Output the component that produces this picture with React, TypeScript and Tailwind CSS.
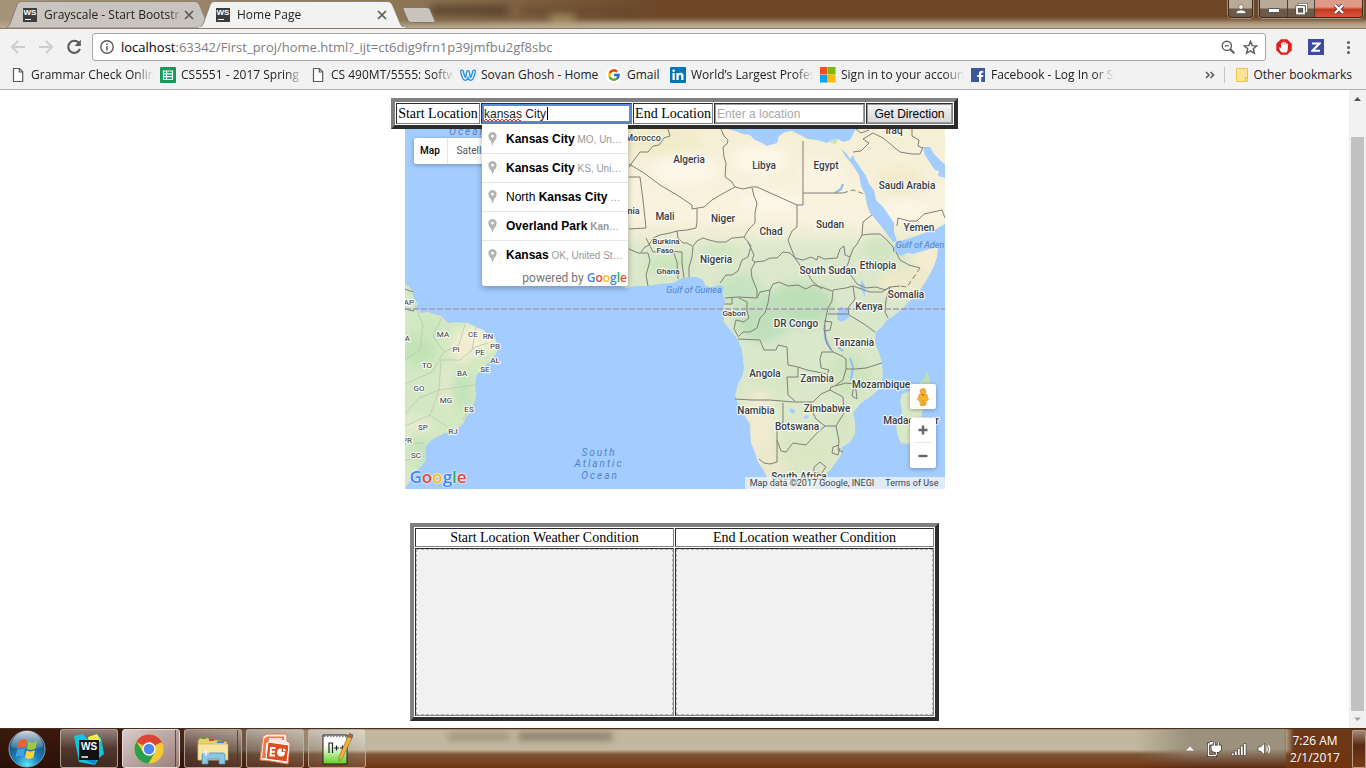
import React from "react";
import { FcGoogle } from "react-icons/fc";

const africa =
  "M600 120 L722 120 L724 128 L735 131 L743 134 L750 135 L755 140 L760 142 L767 146 L777 143 L779 136 L785 132 L792 131 L800 135 L808 139 L817 140 L827 143 L832 140 L838 139 L843 142 L850 140 L852 136 L856 129 L856 120 L960 120 L960 222 L945 224 L936 229 L927 232 L914 237 L900 241 L896 242 L893 249 L897 254 L901 256 L907 253 L913 254 L927 250 L938 247 L937 257 L933 268 L928 277 L924 284 L920 290 L912 299 L903 308 L895 315 L887 320 L882 327 L876 332 L875 343 L878 350 L882 362 L883 377 L878 390 L870 397 L861 403 L853 413 L855 422 L855 434 L850 442 L842 447 L841 455 L837 461 L831 469 L823 477 L815 489 L815 500 L771 500 L771 489 L767 477 L763 469 L758 462 L755 452 L751 443 L750 424 L745 416 L742 407 L737 402 L735 395 L738 384 L742 377 L744 368 L743 360 L742 350 L738 340 L731 331 L724 322 L723 310 L725 301 L723 294 L724 287 L720 285 L712 287 L706 287 L703 280 L697 277 L689 277 L680 279 L673 283 L660 284 L648 286 L636 286 L626 288 L600 280 Z";

const brazil =
  "M400 281 L405 284 L409 286 L412 291 L414 299 L418 304 L412 312 L418 309 L421 313 L428 312 L434 314 L442 316 L445 320 L448 323 L456 322 L468 323 L474 326 L483 330 L488 334 L495 338 L498 346 L497 352 L493 358 L488 363 L482 369 L476 376 L475 385 L476 395 L474 404 L472 412 L466 417 L463 424 L454 431 L445 433 L437 437 L430 441 L425 447 L426 455 L425 462 L420 467 L415 473 L410 481 L405 489 L400 500 Z";

const madagascar =
  "M927 372 L930 381 L929 391 L925 403 L921 417 L916 432 L912 441 L908 444 L901 443 L898 437 L896 427 L901 416 L902 410 L900 402 L902 394 L910 391 L918 386 L924 378 Z";

const borders = [
  "M629 167 L634 160 L640 152 L648 152 L653 146 L659 145 L664 138 L670 136 L668 129",
  "M629 164 L644 173 L660 185 L677 195 L692 205 L692 209 L698 208 L704 207 L712 200 L722 194 L735 187",
  "M629 177 L640 177 L643 200 L646 228 L629 229",
  "M721 129 L724 136 L728 140 L727 144 L723 147 L724 157 L726 163 L725 177 L731 181 L735 187 L743 189 L752 187 L757 187 L777 196 L797 205 L803 205 L803 141",
  "M803 193 L843 193",
  "M697 209 L697 222 L696 228 L687 230 L677 231 L670 233 L660 235 L653 238 L649 245 L645 247 L641 252",
  "M752 188 L754 196 L757 203 L755 213 L755 223 L749 229 L744 237 L732 238 L726 242 L717 242 L709 240 L703 238 L697 241 L693 246 L692 257 L689 267 L689 277",
  "M677 231 L678 238 L683 243 L687 243 L692 246",
  "M667 251 L682 252 L682 263 L684 278 M673 251 L677 262 L678 279",
  "M629 249 L638 253 L648 253 L650 261 L646 275 L648 286",
  "M646 238 L653 252 L667 251",
  "M744 237 L748 242 L751 246 L748 257 L742 260 L738 271 L732 275 L726 275 L720 283",
  "M748 242 L754 255 L752 260 L755 262 L751 270 L752 278 L757 290 L757 298",
  "M755 262 L764 261 L770 258 L777 258 L783 252 L790 253 L795 258 L802 268 L807 273 L813 282 L822 289",
  "M797 205 L797 227 L792 231 L788 240 L791 248 L795 258 L803 260 L811 257 L817 260 L818 256 L824 259 L837 258 L840 249 L844 246 L845 255 L850 257 L853 249 L857 244 L862 235 L863 222 L868 218 L872 215",
  "M850 257 L848 264 L845 268 L850 274 L857 284 L866 288 L876 287 L885 290 L890 287 L900 286",
  "M862 235 L871 234 L880 234 L886 239 L893 247 L894 252",
  "M896 252 L900 260 L909 265 L920 268",
  "M897 226 L898 218 L909 221 L917 221 L924 214 L942 210 L945 218",
  "M853 152 L861 151 L869 143 L863 139 L873 133 L883 138 L900 152 L912 154 L920 154 L923 147",
  "M856 129 L861 133 L869 130",
  "M912 129 L912 136 L919 140 L918 146 L923 148",
  "M725 298 L738 297 L757 298 L760 292 L770 290 L773 284 L779 282 L788 286 L798 285 L806 289 L813 285 L824 288 L832 291",
  "M770 290 L768 303 L765 313 L760 318 L757 328 L750 332 L743 332 L738 337",
  "M732 298 L732 304 L724 304 M739 298 L747 302 L747 311 L749 318 L744 322 L736 320 L734 329 L738 336",
  "M738 339 L760 340 L764 350 L776 350 L778 345 L787 347 L788 365 L798 367 L798 377 L787 377 L788 395 L795 401",
  "M798 367 L807 370 L817 372 L827 374 L829 370 L821 368 L820 359 L822 352 L833 352",
  "M833 290 L832 301 L828 308 L826 317 L824 329 L827 344 L833 352 L842 356 L846 359 L846 369 L843 380 L836 385",
  "M833 290 L846 288 L853 286 L870 292 L882 292 L890 287 L886 300 L885 312 L888 318",
  "M853 287 L855 299 L848 308 L849 315 L864 324 L875 332",
  "M828 314 L848 314 M824 321 L832 322 L830 330 L824 331",
  "M846 369 L855 369 L866 368 L882 363",
  "M735 399 L752 400 L770 400 L793 402 L813 402 L821 394 L830 390 L831 387 L846 383 L854 384 L852 396 L857 399 L856 390 L852 382",
  "M783 403 L783 423 L777 423 L777 462 L770 464 L764 463 L759 459",
  "M777 440 L781 451 L786 452 L793 443 L806 445 L817 433 L825 426 L816 419 L812 411 L810 402",
  "M830 390 L843 397 L844 413 L836 426 L825 426 M836 426 L839 441 L838 450 L843 452",
  "M839 445 L833 447 L832 453 L838 455 L840 448",
  "M814 467 L820 462 L826 467 L821 474 L814 472 Z",
];

const stateLines =
  "M415 305 L423 325 L420 350 L405 360 M442 317 L433 336 L444 352 L432 372 L405 384 M465 324 L459 345 L444 352 M476 327 L472 350 L460 360 L441 360 M488 343 L472 348 L486 357 M441 360 L439 390 L475 385 M439 390 L419 398 L405 414 M439 390 L430 415 L449 428 M430 415 L405 426 M405 444 L424 443 M405 460 L425 456 M474 405 L462 420";

const patches: [number, number, number, number, string][] = [
  [660, 140, 42, 16, "#f2ebc9"],
  [685, 170, 34, 14, "#fbf7e8"],
  [760, 160, 28, 14, "#fbf7e8"],
  [822, 178, 22, 16, "#faf4e2"],
  [900, 182, 26, 16, "#f3ebcb"],
  [770, 202, 30, 10, "#fbf7e8"],
  [905, 208, 22, 8, "#fbf6e4"],
  [926, 262, 16, 22, "#f3ecd0"],
  [905, 283, 28, 14, "#eee9ca"],
  [878, 250, 16, 14, "#d2e5c3"],
  [668, 266, 22, 10, "#cbe6bd"],
  [718, 252, 20, 7, "#cfe5c0"],
  [800, 305, 34, 22, "#bddfb8"],
  [763, 318, 28, 24, "#bfe0ba"],
  [740, 290, 22, 16, "#c6e3bf"],
  [845, 340, 22, 22, "#d9e6c6"],
  [850, 375, 20, 22, "#cfe4be"],
  [775, 375, 26, 18, "#d7e7c5"],
  [760, 425, 16, 36, "#f0ead0"],
  [772, 460, 18, 18, "#ece8cc"],
  [805, 452, 28, 16, "#dbe6c4"],
  [842, 427, 10, 18, "#d6e6c5"],
];

const brazilPatches: [number, number, number, number, string][] = [
  [474, 340, 20, 14, "#f4efd2"],
  [462, 350, 10, 14, "#f0ecd0"],
  [448, 388, 8, 26, "#e0e8c8"],
  [418, 350, 18, 16, "#c2e3b6"],
  [463, 390, 10, 20, "#c3e4ba"],
  [430, 330, 12, 10, "#cde7bd"],
  [410, 400, 16, 14, "#d4e6c2"],
  [415, 425, 18, 9, "#e3eacb"],
  [420, 450, 8, 14, "#c3e4ba"],
];

const countries: [string, number, number, number?][] = [
  ["Algeria", 689, 163],
  ["Libya", 764, 169],
  ["Egypt", 826, 169],
  ["Saudi Arabia", 907, 189],
  ["Mali", 665, 220],
  ["Niger", 723, 222],
  ["Chad", 771, 235],
  ["Sudan", 830, 228],
  ["Yemen", 919, 231],
  ["Nigeria", 716, 263],
  ["South Sudan", 828, 274],
  ["Ethiopia", 878, 269],
  ["Somalia", 906, 298],
  ["Kenya", 869, 310],
  ["DR Congo", 796, 327],
  ["Tanzania", 854, 346],
  ["Angola", 765, 377],
  ["Zambia", 817, 382],
  ["Mozambique", 881, 388],
  ["Namibia", 756, 414],
  ["Zimbabwe", 827, 412],
  ["Botswana", 797, 430],
  ["Madagascar", 911, 424],
  ["South Africa", 799, 480],
  ["Iraq", 894, 134],
  ["Morocco", 643, 141, 9],
  ["Mauritania", 618, 214, 9],
  ["Burkina", 666, 244, 8],
  ["Faso", 665, 253, 8],
  ["Ghana", 668, 274, 8],
  ["Gabon", 734, 316, 8],
];

const states: [string, number, number][] = [
  ["AP", 409, 305],
  ["PA", 405, 341],
  ["MA", 443, 337],
  ["CE", 473, 337],
  ["RN", 488, 339],
  ["PI", 456, 352],
  ["PB", 495, 349],
  ["PE", 480, 355],
  ["AL", 495, 363],
  ["TO", 427, 368],
  ["BA", 462, 376],
  ["SE", 485, 372],
  ["GO", 419, 391],
  ["MG", 446, 403],
  ["ES", 469, 412],
  ["SP", 423, 430],
  ["RJ", 453, 434],
  ["PR", 407, 443],
  ["SC", 416, 458],
];

function MapCanvas() {
  return (
    <svg viewBox="405 129 540 360" className="block h-full w-full" role="img" aria-label="Map of Africa and the South Atlantic">
      <defs>
        <linearGradient id="land" gradientUnits="userSpaceOnUse" x1="0" y1="129" x2="0" y2="489">
          <stop offset="0" stopColor="#f6efd6" />
          <stop offset="0.25" stopColor="#f9f2de" />
          <stop offset="0.29" stopColor="#eeeed4" />
          <stop offset="0.34" stopColor="#dce8cb" />
          <stop offset="0.6" stopColor="#d8e8ca" />
          <stop offset="1" stopColor="#dfe8c9" />
        </linearGradient>
        <clipPath id="africaClip"><path d={africa} /></clipPath>
        <clipPath id="brazilClip"><path d={brazil} /></clipPath>
        <filter id="soften" x="-30%" y="-30%" width="160%" height="160%"><feGaussianBlur stdDeviation="5" /></filter>
      </defs>
      <rect x="405" y="129" width="540" height="360" fill="#a3ccff" />
      <path d={africa} fill="url(#land)" />
      <g clipPath="url(#africaClip)">
        {patches.map(([x, y, rx, ry, c], i) => (
          <ellipse key={i} cx={x} cy={y} rx={rx} ry={ry} fill={c} filter="url(#soften)" />
        ))}
      </g>
      <path d={brazil} fill="#d3e8c3" />
      <g clipPath="url(#brazilClip)">
        {brazilPatches.map(([x, y, rx, ry, c], i) => (
          <ellipse key={i} cx={x} cy={y} rx={rx} ry={ry} fill={c} filter="url(#soften)" />
        ))}
        <path d={stateLines} fill="none" stroke="#b9c9ae" strokeWidth="0.8" />
      </g>
      <path d={madagascar} fill="#d9e8c6" />
      <path d="M927 372 L930 381 L929 391 L923 412 L920 400 L920 385 Z" fill="#b9dfb2" />

      {/* Red Sea, Gulf of Suez and Persian Gulf */}
      <path d="M841 149 L847 154 L850 159 L853 155 L855 160 L862 170 L866 176 L869 184 L874 190 L876 200 L883 207 L890 217 L894 223 L894 232 L897 241 L893 242 L884 230 L877 221 L870 213 L867 205 L865 194 L861 186 L859 175 L852 164 L846 157 Z" fill="#a3ccff" />
      <path d="M923 147 L930 147 L934 154 L941 161 L946 165 L946 178 L938 176 L939 171 L935 170 L930 163 L925 155 Z" fill="#a3ccff" />
      <path d="M829 141 L838 139 L836 144 L831 143 Z" fill="#c9e6bb" />
      <path d="M837 314 L840 307 L848 308 L849 318 L842 322 L838 320 Z M865 286 L862 280 L860 287 L865 297 Z M790 408 l5 2 l-1 4 l-4 -2z M803 417 l4 -2 l2 2 l-3 2z" fill="#a3ccff" />
      <path d="M825 325 L825 338 L831 350 M850 358 L853 367 L851 380 M835 193 L841 189 L843 184 M838 347 L843 351" fill="none" stroke="#93bff5" strokeWidth="2.2" />

      <g fill="none" stroke="#807f78" strokeWidth="1" strokeLinejoin="round">
        {borders.map((d) => <path key={d} d={d} />)}
        <path d="M843 193 L853 190 L864 194 M920 268 L907 287 L900 286" strokeDasharray="5 3" />
        <path d="M405 289 L413 292 M405 309 L414 311" />
      </g>
      <path d="M405 309 H945" stroke="#a596b8" strokeWidth="1.6" strokeDasharray="6 2" />

      <g fontFamily="Roboto, sans-serif" textAnchor="middle" fill="#393c3e" stroke="#ffffff" strokeWidth="2.5" strokeOpacity="0.75" strokeLinejoin="round" paintOrder="stroke" fontWeight="500">
        {countries.map(([name, x, y, size]) => (
          <text key={name} x={x} y={y} fontSize={size ?? 10}>{name}</text>
        ))}
        <g fontSize="8" fontWeight="400">
          {states.map(([name, x, y]) => <text key={name} x={x} y={y}>{name}</text>)}
        </g>
      </g>
      <g fontFamily="Roboto, sans-serif" textAnchor="middle" fontStyle="italic" fill="#4f83cc">
        <text x="694" y="293" fontSize="9">Gulf of Guinea</text>
        <text x="920" y="248" fontSize="9">Gulf of Aden</text>
        <g fontSize="10" letterSpacing="2">
          <text x="599" y="456">South</text>
          <text x="599" y="467">Atlantic</text>
          <text x="600" y="479">Ocean</text>
          <text x="468" y="135">Ocean</text>
        </g>
      </g>
    </svg>
  );
}

function GoogleWord({ className }: { className: string }) {
  return (
    <span className={className}>
      <span className="text-[#4285f4]">G</span>
      <span className="text-[#ea4335]">o</span>
      <span className="text-[#fbbc05]">o</span>
      <span className="text-[#4285f4]">g</span>
      <span className="text-[#34a853]">l</span>
      <span className="text-[#ea4335]">e</span>
    </span>
  );
}

function WsIcon() {
  return (
    <span className="relative flex h-[14px] w-[14px] shrink-0 justify-center bg-[#3c3c3c] font-['Liberation_Sans',sans-serif] text-[8px] leading-[10px] font-bold text-white">
      WS
      <span className="absolute bottom-[2px] left-[2px] h-px w-[6px] bg-white" />
    </span>
  );
}

function Cross() {
  return (
    <svg viewBox="0 0 10 10" className="h-[10px] w-[10px]">
      <path d="M1 1 L9 9 M9 1 L1 9" stroke="#5a5a5a" strokeWidth="1.7" />
    </svg>
  );
}

function Tab({ title, active }: { title: string; active?: boolean }) {
  return (
    <div className={active ? "relative z-10 -ml-[13px] flex h-[27px] w-[206px] items-center pr-[16px] pl-[17px]" : "relative flex h-[27px] w-[206px] items-center pr-[16px] pl-[17px]"}>
      <svg viewBox="0 0 206 27" preserveAspectRatio="none" className="absolute inset-0 h-full w-full">
        <path d="M0 27 Q3 26 4.500 22 L11 4 Q12 0.500 15 0.500 H189 Q192 0.500 193.500 4 L201 22 Q202.500 26.500 206 27 Z" fill={active ? "#f2f2f2" : "#c9c5be"} stroke="#8a8378" strokeWidth="1" />
        {active && <path d="M0 27 H206" stroke="#f2f2f2" strokeWidth="2" />}
      </svg>
      <div className="relative flex w-full items-center">
        <WsIcon />
        <span className="ml-[7px] w-[138px] overflow-hidden text-[12px] leading-4 whitespace-nowrap text-[#222] [mask-image:linear-gradient(to_right,black_90%,transparent)]">{title}</span>
        <button aria-label={`Close ${title}`} className="ml-[2px]"><Cross /></button>
      </div>
    </div>
  );
}

function TitleBar() {
  return (
    <header className="relative flex h-[29px] items-end overflow-hidden border-b border-[#8a7c68] bg-linear-to-b from-[#6e4729] from-60% to-[#b5a58c] to-95% pl-[6px]">
      <div className="absolute inset-y-0 left-0 w-[660px] bg-linear-to-r from-[#a69478] via-[#8c7352] via-65% to-transparent" />
      <div className="absolute inset-x-0 bottom-0 h-[8px] bg-linear-to-b from-transparent to-[#b9ab92]" />
      <div className="absolute top-[6px] left-[430px] h-[9px] w-[78px] bg-[#3f2d1b]/70 blur-[4px]" />
      <div className="absolute top-[7px] left-[520px] h-[8px] w-[118px] bg-[#5a452a]/60 blur-[4px]" />
      <div className="absolute top-[15px] left-[550px] h-[7px] w-[24px] bg-[#d4c78f]/60 blur-[4px]" />
      <Tab title="Grayscale - Start Bootstrap" />
      <Tab title="Home Page" active />
      <button aria-label="New tab" className="relative -ml-[4px] mb-[4px] h-[18px] w-[36px]">
        <svg viewBox="0 0 36 18" className="h-full w-full">
          <path d="M3 1.500 H26 Q28 1.500 29 3.500 L34 15 Q34.500 16.500 32.500 16.500 H10 Q8 16.500 7 14.500 L2 3 Q1.500 1.500 3 1.500Z" fill="#c9c5be" stroke="#80776b" />
        </svg>
      </button>
      <div className="relative mr-[3px] ml-auto flex items-start self-start">
        <button aria-label="Profile" className="mr-[6px] flex h-[18px] w-[25px] items-center justify-center rounded-b-[4px] border border-t-0 border-[#382b1e] bg-linear-to-b from-[#b9aa98] from-45% to-[#6d5a46] to-55% ring-1 ring-[#c9bda9]/60">
          <svg viewBox="0 0 10 10" className="h-[10px] w-[10px]"><circle cx="5" cy="3" r="2.300" fill="#fff" stroke="#555" strokeWidth=".6" /><path d="M0.500 9.500 V8 Q1 6 5 6 Q9 6 9.500 8 V9.500 Z" fill="#fff" stroke="#555" strokeWidth=".6" /></svg>
        </button>
        <div className="flex h-[18px] overflow-hidden rounded-b-[4px] border border-t-0 border-[#382b1e] ring-1 ring-[#c9bda9]/60">
          <button aria-label="Minimize" className="flex w-[28px] items-center justify-center border-r border-[#4d3e30] bg-linear-to-b from-[#b9aa98] from-45% to-[#6d5a46] to-55%">
            <span className="mt-[3px] h-[5px] w-[12px] rounded-[1px] border border-[#555] bg-white" />
          </button>
          <button aria-label="Restore" className="flex w-[27px] items-center justify-center border-r border-[#4d3e30] bg-linear-to-b from-[#b9aa98] from-45% to-[#6d5a46] to-55%">
            <svg viewBox="0 0 13 12" className="h-[12px] w-[13px]" fill="none"><path d="M4 3 V1.500 H11.500 V8.500 H9" stroke="#444" strokeWidth="2.500" /><path d="M4 2.500 V1.500 H11.500 V8.500 H9" stroke="#fff" strokeWidth="1.500" /><rect x="2" y="4" width="7" height="6.500" stroke="#444" strokeWidth="3" /><rect x="2" y="4" width="7" height="6.500" stroke="#fff" strokeWidth="1.800" /></svg>
          </button>
          <button aria-label="Close window" className="flex w-[47px] items-center justify-center bg-linear-to-b from-[#dd9a88] from-40% via-[#c5371c] via-55% to-[#d4573a]">
            <svg viewBox="0 0 12 10" className="h-[10px] w-[12px]"><path d="M2 1 L10 9 M10 1 L2 9" stroke="#5b3a3a" strokeWidth="4" /><path d="M2 1 L10 9 M10 1 L2 9" stroke="#fff" strokeWidth="2.400" /></svg>
          </button>
        </div>
      </div>
    </header>
  );
}

function Toolbar() {
  return (
    <div className="flex h-[35px] items-center bg-[#f2f2f2] pt-[1px] pr-[10px] pl-[10px]">
      <div className="flex w-[82px] items-center gap-[12px]">
        <button aria-label="Back">
          <svg viewBox="0 0 16 16" className="h-4 w-4" fill="none" stroke="#cdcdcd" strokeWidth="2"><path d="M15 8 H2.500 M8 2 L2 8 L8 14" /></svg>
        </button>
        <button aria-label="Forward">
          <svg viewBox="0 0 16 16" className="h-4 w-4" fill="none" stroke="#cdcdcd" strokeWidth="2"><path d="M1 8 H13.500 M8 2 L14 8 L8 14" /></svg>
        </button>
        <button aria-label="Reload">
          <svg viewBox="0 0 16 16" className="h-4 w-4"><path d="M12.700 3.800 A6 6 0 1 0 13.900 9.800" fill="none" stroke="#5a5a5a" strokeWidth="2.100" /><path d="M14.800 0.800 V7 H8.600 Z" fill="#5a5a5a" /></svg>
        </button>
      </div>
      <div className="flex h-[28px] flex-1 items-center rounded-[3px] border border-[#a8a8a8] bg-white px-[7px]">
        <svg viewBox="0 0 14 14" className="h-[14px] w-[14px] shrink-0"><circle cx="7" cy="7" r="6.200" fill="none" stroke="#5a5a5a" strokeWidth="1.400" /><path d="M7 6.200 V10.500 M7 3.500 V5" stroke="#5a5a5a" strokeWidth="1.600" /></svg>
        <p className="ml-[7px] flex-1 text-[13px] leading-5 text-[#7d7d7d]"><span className="text-black">localhost</span>:63342/First_proj/home.html?_ijt=ct6dig9frn1p39jmfbu2gf8sbc</p>
        <button aria-label="Zoom" className="mr-[8px]">
          <svg viewBox="0 0 14 14" className="h-[14px] w-[14px]" fill="none" stroke="#5a5a5a"><circle cx="5.800" cy="5.800" r="4.600" strokeWidth="1.400" /><path d="M9.200 9.200 L13.300 13.300" strokeWidth="2" /><path d="M3.800 5.800 H7.800" strokeWidth="1.200" /></svg>
        </button>
        <button aria-label="Bookmark this page">
          <svg viewBox="0 0 15 15" className="h-[15px] w-[15px]"><path d="M7.500 1.300 L9.200 5.600 L13.800 5.900 L10.200 8.800 L11.400 13.300 L7.500 10.800 L3.600 13.300 L4.800 8.800 L1.200 5.900 L5.800 5.600 Z" fill="none" stroke="#5a5a5a" strokeWidth="1.400" /></svg>
        </button>
      </div>
      <div className="flex items-center">
        <button aria-label="Ad blocker" className="ml-[10px]">
          <svg viewBox="0 0 16 16" className="h-4 w-4"><path d="M4.800 .3 H11.200 L15.700 4.800 V11.200 L11.200 15.700 H4.800 L.3 11.200 V4.800 Z" fill="#e01f1f" /><path d="M5 13 Q3.300 10.500 2.900 8.500 Q4 7.800 5 9.500 V4.200 Q5.500 3.400 6.200 4.200 V7.500 L6.500 3 Q7.200 2 7.900 3 V7.300 L8.400 3 Q9.200 2.200 9.800 3.200 V7.600 L10.300 4.500 Q11.300 3.800 11.800 4.800 V10 Q11.600 12 10.500 13.500 H6 Z" fill="#fff" /></svg>
        </button>
        <button aria-label="Zotero" className="ml-[16px] flex h-4 w-4 items-center justify-center bg-[#3d4ba0]">
          <svg viewBox="0 0 10 10" className="h-[10px] w-[10px]"><path d="M1 1.500 H8.500 L1.500 8.700 H9" fill="none" stroke="#fff" strokeWidth="2" /></svg>
        </button>
        <button aria-label="Menu" className="ml-[16px] flex w-4 flex-col items-center gap-[2px]">
          <span className="h-[3px] w-[3px] rounded-full bg-[#5a5a5a]" />
          <span className="h-[3px] w-[3px] rounded-full bg-[#5a5a5a]" />
          <span className="h-[3px] w-[3px] rounded-full bg-[#5a5a5a]" />
        </button>
      </div>
    </div>
  );
}

const DocIcon = () => (
  <svg viewBox="0 0 16 16" className="h-4 w-4"><path d="M3.500 1.500 H9.500 L12.700 4.700 V14.500 H3.500 Z M9.300 1.500 V5 H12.700" fill="#fff" stroke="#5a5a5a" strokeWidth="1.200" /></svg>
);

const bookmarks: { label: string; width: string; icon: React.ReactNode }[] = [
  { label: "Grammar Check Online", width: "w-[123px]", icon: <DocIcon /> },
  { label: "CS5551 - 2017 Spring", width: "w-[123px]", icon: <svg viewBox="0 0 16 16" className="h-4 w-4"><rect width="16" height="16" rx="1" fill="#0f9d58" /><path d="M3.500 4 H12.500 V12.500 H3.500 Z M3.500 6.800 H12.500 M3.500 9.600 H12.500 M6.500 4 V12.500" fill="none" stroke="#fff" strokeWidth="1.200" /></svg> },
  { label: "CS 490MT/5555: Softw", width: "w-[123px]", icon: <DocIcon /> },
  { label: "Sovan Ghosh - Home", width: "w-[119px]", icon: <svg viewBox="0 0 16 16" className="h-4 w-4" fill="none" strokeLinejoin="round" strokeLinecap="round"><path d="M2 4.500 Q3.500 12 5.500 12 Q7 12 8 5 Q9 12 10.500 12 Q12.500 12 14 4.500" stroke="#2990ea" strokeWidth="4" /><path d="M2 4.500 Q3.500 12 5.500 12 Q7 12 8 5 Q9 12 10.500 12 Q12.500 12 14 4.500" stroke="#e8f3fd" strokeWidth="1.300" /></svg> },
  { label: "Gmail", width: "w-[37px]", icon: <span className="flex h-4 w-4 items-center justify-center rounded-full bg-white"><FcGoogle size={14} /></span> },
  { label: "World’s Largest Profes", width: "w-[123px]", icon: <svg viewBox="0 0 16 16" className="h-4 w-4"><rect width="16" height="16" rx="1" fill="#0077b5" /><path d="M2.500 6 H4.800 V13 H2.500Z M6.400 6 H8.600 V7 Q9.300 5.800 11 5.800 Q13.500 5.800 13.500 8.800 V13 H11.200 V9.300 Q11.200 7.800 10 7.800 Q8.700 7.800 8.700 9.300 V13 H6.400Z" fill="#fff" /><circle cx="3.650" cy="3.700" r="1.300" fill="#fff" /></svg> },
  { label: "Sign in to your accoun", width: "w-[123px]", icon: <svg viewBox="0 0 16 16" className="h-4 w-4"><path d="M0 0h7.500v7.500H0z" fill="#f25022" /><path d="M8 0h7.500v7.500H8z" fill="#7fba00" /><path d="M0 8h7.500v7.500H0z" fill="#00a4ef" /><path d="M8 8h7.500v7.500H8z" fill="#ffb900" /></svg> },
  { label: "Facebook - Log In or S", width: "w-[123px]", icon: <svg viewBox="0 0 16 16" className="h-4 w-4"><rect x="1" y="1" width="14" height="14" fill="#3b5998" /><path d="M9 15 V10 H7.300 V8 H9 V6.300 Q9 3.700 11.600 3.700 H13.300 V5.800 H12 Q11.200 5.800 11.200 6.600 V8 H13.300 L13 10 H11.200 V15Z" fill="#fff" /></svg> },
];

function BookmarksBar() {
  return (
    <nav className="flex h-[26px] items-center gap-[6px] border-b border-[#b0b0b0] bg-[#f2f2f2] pr-[14px] pb-[4px] pl-[10px] text-[12px] leading-4 text-[#222]">
      {bookmarks.map((b) => (
        <a key={b.label} href="#" className="flex shrink-0 items-center gap-[5px]">
          {b.icon}
          <span className={`${b.width} overflow-hidden whitespace-nowrap ${b.width === "w-[123px]" ? "[mask-image:linear-gradient(to_right,black_84%,transparent)]" : ""}`}>{b.label}</span>
        </a>
      ))}
      <div className="ml-auto flex items-center">
        <button aria-label="More bookmarks">
          <svg viewBox="0 0 10 8" className="h-[8px] w-[10px]" fill="none" stroke="#5a5a5a" strokeWidth="1.600"><path d="M1 1 L4 4 L1 7 M5.500 1 L8.500 4 L5.500 7" /></svg>
        </button>
        <span className="mx-[9px] h-[16px] w-px bg-[#c4c4c4]" />
        <a href="#" className="flex items-center gap-[3px] whitespace-nowrap">
          <svg viewBox="0 0 16 16" className="h-4 w-4"><path d="M2.500 1.500 H13.500 V14.500 H2.500 Z" fill="#fee391" stroke="#eac54f" /><path d="M11.500 14.500 V10.500 H13.500" fill="none" stroke="#e4b93e" /></svg>
          Other bookmarks
        </a>
      </div>
    </nav>
  );
}

const suggestions = [
  { pre: "", main: "Kansas City", rest: "MO, United States" },
  { pre: "", main: "Kansas City", rest: "KS, United States" },
  { pre: "North ", main: "Kansas City", rest: "MO, United States" },
  { pre: "", main: "Overland Park", rest: "Kansas City, KS", boldRest: true },
  { pre: "", main: "Kansas", rest: "OK, United States" },
];

function Suggestions() {
  return (
    <div className="absolute top-full left-0 z-20 mt-px w-[146px] rounded-b-[2px] bg-white pt-px shadow-[0_2px_6px_rgba(0,0,0,0.3)]">
      <ul className="divide-y divide-[#e6e6e6]">
        {suggestions.map((s, i) => (
          <li key={i} className="flex h-[29px] items-center pr-[4px] pl-[6px] text-left">
            <svg viewBox="0 0 9 14" className="mr-[9px] h-[14px] w-[9px] shrink-0"><path d="M4.500 0 A4.200 4.200 0 0 1 8.700 4.200 Q8.700 6.500 6.500 8.800 Q5 11 4.500 14 Q4 11 2.500 8.800 Q.3 6.500 .3 4.200 A4.200 4.200 0 0 1 4.500 0 Z" fill="#b4b4b4" /><circle cx="4.500" cy="4.200" r="1.400" fill="#fff" /></svg>
            <span className="min-w-0 truncate text-[10px] leading-5 text-[#999]">
              <span className="text-[12px] text-black">{s.pre}<b>{s.main}</b></span>{" "}
              {s.boldRest ? <b>{s.rest}</b> : s.rest}
            </span>
          </li>
        ))}
      </ul>
      <p className="flex h-[16px] items-center justify-end gap-[3px] overflow-hidden pr-px text-[11px] text-[#757575]">
        <span className="font-[Roboto,sans-serif] text-[12px] leading-4">powered by</span>
        <GoogleWord className="font-['Open_Sans',sans-serif] text-[12px] leading-4 font-semibold" />
      </p>
    </div>
  );
}

const cell = "border border-t-[#2c2c2c] border-r-[#808080] border-b-[#808080] border-l-[#2c2c2c]";
const frame = "border-separate border-spacing-px border-4 border-t-[#808080] border-r-[#2c2c2c] border-b-[#2c2c2c] border-l-[#808080]";

function DirectionForm() {
  return (
    <table className={`${frame} relative z-10 bg-white font-['Liberation_Serif',serif] text-[14px] leading-[17px] text-black`}>
      <tbody>
        <tr>
          <td className={`${cell} h-[21px] w-[84px] text-center whitespace-nowrap`}><label htmlFor="start">Start Location</label></td>
          <td className={`${cell} w-[151px]`}>
            <div className="relative font-['Liberation_Sans',sans-serif]">
              <input id="start" defaultValue="kansas City" autoComplete="off" className="block h-[19px] w-full border-2 border-[#5b8ad6] bg-white text-[12px] text-[#222] outline-none" />
              <svg viewBox="0 0 39 3" className="absolute bottom-[1px] left-[2px] h-[3px] w-[39px]"><path d="M0 2 l2 -2 l2 2 l2 -2 l2 2 l2 -2 l2 2 l2 -2 l2 2 l2 -2 l2 2 l2 -2 l2 2 l2 -2 l2 2 l2 -2 l2 2 l2 -2 l2 2 l1 -1" fill="none" stroke="#e03030" strokeWidth="1" /></svg>
              <span className="absolute top-[3px] left-[65px] h-[13px] w-px bg-black" />
              <Suggestions />
            </div>
          </td>
          <td className={`${cell} w-[80px] text-center whitespace-nowrap`}><label htmlFor="end">End Location</label></td>
          <td className={`${cell} w-[151px]`}>
            <input id="end" placeholder="Enter a location" className="block h-[19px] w-full border border-[#a0a0a0] bg-white px-px font-['Liberation_Sans',sans-serif] text-[12px] text-[#222] outline-none placeholder:text-[#a9a9a9]" />
          </td>
          <td className={`${cell} w-[87px]`}>
            <button className="block h-[19px] w-[85px] border border-[#9a9a9a] bg-linear-to-b from-[#f4f4f4] to-[#d8d8d8] font-['Liberation_Sans',sans-serif] text-[12px] leading-4 whitespace-nowrap text-black">Get Direction</button>
          </td>
        </tr>
      </tbody>
    </table>
  );
}

function MapPanel() {
  return (
    <section className="relative h-[360px] w-[540px] overflow-hidden font-[Roboto,sans-serif]">
      <MapCanvas />
      <div className="absolute top-[9px] left-[9px] flex rounded-[2px] bg-white text-[10px] leading-[26px] shadow-[0_1px_4px_rgba(0,0,0,0.3)]">
        <button className="w-[34px] border-r border-[#e6e6e6] text-center font-medium text-black">Map</button>
        <button className="w-[54px] text-center text-[#565656]">Satellite</button>
      </div>
      <GoogleWord className="absolute bottom-[1px] left-[5px] font-['Open_Sans',sans-serif] text-[17px] leading-[22px] font-semibold [text-shadow:0_0_2px_white,0_0_2px_white]" />
      <div className="absolute right-[9px] bottom-[21px] flex flex-col gap-[9px]">
        <button aria-label="Street View" className="flex h-[25px] w-[26px] items-center justify-center rounded-[2px] bg-white shadow-[0_1px_4px_rgba(0,0,0,0.3)]">
          <svg viewBox="0 0 12 18" className="h-[18px] w-[12px]"><path d="M2 7 Q2 6 4 6 H8 Q10 6 10 7 L11.500 12 L9.500 12.500 L8.500 17.500 H3.500 L2.500 12.500 L.5 12 Z" fill="#f7b32b" stroke="#d98f1b" strokeWidth=".6" /><circle cx="6" cy="3.300" r="2.900" fill="#f7b32b" stroke="#d98f1b" strokeWidth=".6" /><path d="M4.500 6.300 L6 8.500 L7.500 6.300Z" fill="#d9691b" /><path d="M6 12 V17.500" stroke="#c8811c" strokeWidth=".7" /></svg>
        </button>
        <div className="flex w-[26px] flex-col items-center rounded-[2px] bg-white shadow-[0_1px_4px_rgba(0,0,0,0.3)]">
          <button aria-label="Zoom in" className="flex h-[24px] w-full items-center justify-center"><svg viewBox="0 0 10 10" className="h-[10px] w-[10px]"><path d="M0.500 5 H9.500 M5 0.500 V9.500" stroke="#666" strokeWidth="2.4" /></svg></button>
          <span className="h-px w-[18px] bg-[#e6e6e6]" />
          <button aria-label="Zoom out" className="flex h-[25px] w-full items-center justify-center"><svg viewBox="0 0 10 10" className="h-[10px] w-[10px]"><path d="M0.500 5 H9.500" stroke="#666" strokeWidth="2.4" /></svg></button>
        </div>
      </div>
      <div className="absolute right-0 bottom-0 flex gap-[11px] bg-[#f5f5f5]/75 pr-[6px] pl-[5px] text-[9px] leading-[12px] text-[#444]">
        <span>Map data ©2017 Google, INEGI</span>
        <a href="#">Terms of Use</a>
      </div>
    </section>
  );
}

function WeatherTable() {
  return (
    <table className={`${frame} mt-[34px] font-['Liberation_Serif',serif] text-[14px] leading-[17px] text-black`}>
      <thead>
        <tr>
          <th className={`${cell} w-[259px] font-normal`}>Start Location Weather Condition</th>
          <th className={`${cell} w-[259px] font-normal`}>End Location weather Condition</th>
        </tr>
      </thead>
      <tbody>
        <tr>
          <td className={cell}><div className="h-[166px] border border-dashed border-[#b4b4b4] bg-[#f1f1f1]" /></td>
          <td className={cell}><div className="h-[166px] border border-dashed border-[#b4b4b4] bg-[#f1f1f1]" /></td>
        </tr>
      </tbody>
    </table>
  );
}

function Scrollbar() {
  return (
    <div className="flex w-[17px] shrink-0 flex-col items-center bg-[#f1f1f1]">
      <svg viewBox="0 0 17 17" className="h-[17px] w-[17px]"><path d="M5 11 H12 L8.500 7 Z" fill="#505050" /></svg>
      <div className="mt-[30px] w-[13px] flex-1 bg-[#c1c1c1]" />
      <svg viewBox="0 0 17 17" className="h-[17px] w-[17px]"><path d="M5 6.500 H12 L8.500 10 Z" fill="#a3a3a3" /></svg>
    </div>
  );
}

const taskApps: { name: string; active?: boolean; stacked?: boolean; icon: React.ReactNode }[] = [
  {
    name: "WebStorm",
    icon: (
      <svg viewBox="0 0 32 32" className="h-8 w-8">
        <path d="M1 3 L10 1 L15 6 L24 1 L28 5 L29 10 L31 21 L26 25 L22 32 L6 29 Z" fill="#14c4d9" />
        <path d="M15 4 L24 1 L28 8 L16 12 Z" fill="#f3ee4e" />
        <path d="M6 24 L22 32 L24 24 Z" fill="#1686d9" />
        <rect x="6" y="7" width="20" height="20" fill="#111" />
        <path d="M8.500 24 H15" stroke="#fff" strokeWidth="1.500" />
        <text x="16" y="17" fontSize="10" fontWeight="700" fontFamily="Liberation Sans, sans-serif" textAnchor="middle" fill="#fff">WS</text>
      </svg>
    ),
  },
  {
    name: "Google Chrome",
    active: true,
    stacked: true,
    icon: (
      <svg viewBox="0 0 32 32" className="h-8 w-8">
        <circle cx="16" cy="16" r="14.500" fill="#f7c934" />
        <path d="M16 16 L3.440 8.750 A14.500 14.500 0 0 1 28.560 8.750 Z" fill="#db4437" />
        <path d="M16 9.500 H28.900 L28.560 8.750 L16 6 Z" fill="#db4437" />
        <path d="M3.440 8.750 A14.500 14.500 0 0 0 15.500 30.500 L21.700 19.500 L10.300 19.300 Z" fill="#2b9f4b" />
        <circle cx="16" cy="16" r="6.700" fill="#fff" />
        <circle cx="16" cy="16" r="5.300" fill="#4a88ee" />
      </svg>
    ),
  },
  {
    name: "File Explorer",
    stacked: true,
    icon: (
      <svg viewBox="0 0 32 32" className="h-8 w-8">
        <path d="M1 8 L3 5 H11 L13 7 H20 L30 9 V27 H1 Z" fill="#e9cf74" stroke="#b9973a" strokeWidth=".7" />
        <path d="M4 4h5v2H4z" fill="#3cab3c" /><path d="M12 6h5v2h-5z" fill="#d0493a" /><path d="M20 8h7v2h-7z" fill="#3a8fd0" />
        <path d="M1 11 H31 V27 H1 Z" fill="#f6e6a2" stroke="#c9a94e" strokeWidth=".6" />
        <path d="M6 20 H26 Q28 20 28 22 V31 H22 V26 H11 V31 H5 V22 Z" fill="#8ec7e4" stroke="#4f8fb8" strokeWidth=".8" />
        <path d="M9 17 v6 M6 20 h6" stroke="#fff" strokeWidth="1.200" />
      </svg>
    ),
  },
  {
    name: "PowerPoint",
    icon: (
      <svg viewBox="0 0 32 32" className="h-8 w-8">
        <path d="M4 3 L8 1 H26 Q28 1 28 3 V8 L31 10 L29 31 L11 28 L1 27 Z" fill="#f7e9e1" stroke="#e07a50" strokeWidth="1" />
        <path d="M8 3.500 H25 V7 L10 7 L7 25 L3 25 L5 6 Z" fill="#e87a50" />
        <path d="M10 6 H23 M8 10 L7 20" stroke="#fff" strokeWidth="1.300" fill="none" />
        <path d="M9 9 L30 12 L28 29 L7 26 Z" fill="#dd4f20" stroke="#fff" strokeWidth="1" />
        <path d="M16.500 15 H12 L11.500 22.500 H16 M12 18.700 H16" stroke="#fff" strokeWidth="1.900" fill="none" />
        <circle cx="22" cy="19.500" r="3.900" fill="#fff" /><path d="M22.500 19 L23 14 L28 18.500 Z" fill="#dd4f20" />
        <path d="M24 18 L24.300 15.200 A3.500 3.500 0 0 1 27 18.300Z" fill="#fff" />
      </svg>
    ),
  },
  {
    name: "Notepad++",
    icon: (
      <svg viewBox="0 0 32 32" className="h-8 w-8">
        <defs><linearGradient id="npp" x1="0" y1="0" x2="0" y2="1"><stop offset=".35" stopColor="#fff" /><stop offset="1" stopColor="#63d01e" /></linearGradient></defs>
        <path d="M2 2 H26 V31 H2 Z" fill="url(#npp)" stroke="#222" strokeWidth="1" />
        <path d="M3 2.500 H25" stroke="#777" strokeWidth="3" strokeDasharray="1.500 1.500" />
        <path d="M8 20 V10 H11.500 V20 M13 15 h5 M15.500 12.500 v5 M19 15 h5 M21.500 12.500 v5" stroke="#222" strokeWidth="1.200" fill="none" />
        <path d="M27 3 L31 5 L21 26 L18 28 L18 24 Z" fill="#eeb23c" stroke="#8a6322" strokeWidth=".6" />
        <path d="M27 3 L28.500 .5 L32 2 L31 5 Z" fill="#cf5a5a" stroke="#444" strokeWidth=".6" />
      </svg>
    ),
  },
];

function Taskbar() {
  return (
    <footer className="relative flex h-[40px] shrink-0 items-center border-t border-[#45301f] bg-linear-to-b from-[#3c1a0e] to-[#2c1008] pl-[8px]">
      <div className="absolute inset-0 border-t border-[#d8ccb6]/60 bg-linear-to-b from-[#c2b89f] from-52% via-[#7a5534] via-64% to-[#73330f] [mask-image:linear-gradient(to_right,transparent_12%,black_27%)]" />
      <div className="absolute inset-y-0 right-[80px] w-[150px] bg-linear-to-b from-[#9b917c] from-50% to-[#5a2a10] [mask-image:linear-gradient(to_right,transparent,black_35%)]" />
      <div className="absolute inset-y-0 right-0 w-[82px] bg-linear-to-b from-[#6b3a1a] to-[#70340f] [mask-image:linear-gradient(to_right,transparent,black_12%)]" />
      <div className="absolute top-[3px] left-[448px] flex gap-2 blur-[3px]" aria-hidden="true">
        <span className="h-[9px] w-[62px] bg-[#6b6552]/35" />
        <span className="h-[9px] w-[94px] bg-[#5b5646]/50" />
      </div>
      <button aria-label="Start" className="relative mr-[14px]">
        <svg viewBox="0 0 38 38" className="h-[38px] w-[38px]">
          <defs>
            <radialGradient id="orb" cx=".5" cy=".95" r=".9"><stop offset="0" stopColor="#5fe6ff" /><stop offset=".4" stopColor="#1c7fb8" /><stop offset="1" stopColor="#143f66" /></radialGradient>
            <linearGradient id="gloss" x1="0" y1="0" x2="0" y2="1"><stop offset="0" stopColor="#fff" stopOpacity=".8" /><stop offset="1" stopColor="#fff" stopOpacity=".1" /></linearGradient>
          </defs>
          <circle cx="19" cy="19" r="18" fill="url(#orb)" stroke="#8aa0ad" strokeWidth="1" />
          <path d="M3 17 A16 16 0 0 1 35 17 Q19 22 3 17Z" fill="url(#gloss)" />
          <path d="M11 11 Q15 8 19 10.500 L17.500 18 Q13 16 9.500 18.500 Z" fill="#f0602a" />
          <path d="M20.500 11.500 Q25 13.500 29 11 L27.500 18.500 Q23.500 21 19 19 Z" fill="#9fcb3b" />
          <path d="M9 20 Q13 17.500 17 19.700 L15.500 27 Q11.500 25 7.500 27.500 Z" fill="#3f9fe8" />
          <path d="M18.500 20.500 Q23 22.500 27 20 L25.500 27.500 Q21.500 30 17 28 Z" fill="#fcd13c" />
        </svg>
      </button>
      <div className="relative flex h-full gap-[4px]">
        {taskApps.map((a) => (
          <button
            key={a.name}
            aria-label={a.name}
            className={
              a.active
                ? "relative flex h-[39px] w-[58px] items-center justify-center rounded-[3px] border border-[#e6dcd8] bg-linear-to-br from-[#d8cccb] to-[#9b8079] pr-[4px]"
                : "relative flex h-[39px] w-[58px] items-center justify-center rounded-[3px] border border-[#c2b3a6]/80 bg-linear-to-b from-white/45 via-white/15 to-white/10"
            }
          >
            {a.icon}
            {a.stacked && <span className="absolute inset-y-0 right-[3px] border-r border-[#4a3329]/80" />}
          </button>
        ))}
      </div>
      <div className="relative ml-auto flex items-center text-white">
        <svg viewBox="0 0 8 5" className="mr-[12px] h-[5px] w-[8px]"><path d="M0 4.500 L4 .5 L8 4.500Z" fill="#fff" /></svg>
        <svg viewBox="0 0 16 16" className="mr-[9px] h-4 w-4"><path d="M6.500 3 H2.500 V14.500 H9.500 V12.500 M4 1.500 H7" fill="none" stroke="#2b2219" strokeWidth="3" /><path d="M6.500 3 H2.500 V14.500 H9.500 V12.500 M4 1.500 H7" fill="none" stroke="#fff" strokeWidth="1.600" /><path d="M6 5 H14.500 V8 Q14.500 10.500 10.300 10.500 Q6 10.500 6 8 Z M8.300 1.500 V5 M12.300 1.500 V5 M10.300 10 V14" fill="#fff" stroke="#2b2219" strokeWidth="2.400" /><path d="M6 5 H14.500 V8 Q14.500 10.500 10.300 10.500 Q6 10.500 6 8 Z M8.300 1.500 V5 M12.300 1.500 V5 M10.300 10 V14" fill="#fff" stroke="#fff" strokeWidth="1.200" /></svg>
        <svg viewBox="0 0 16 14" className="mr-[10px] h-[14px] w-4" fill="#fff" stroke="#3a3025" strokeWidth=".6"><path d="M.5 11h2.500v2.500H.500zM3.500 9h2.500v4.500H3.500zM6.500 6.500h2.500v7H6.500zM9.500 4h2.500v9.500H9.500zM12.500 1.500h2.500v12H12.500z" /></svg>
        <svg viewBox="0 0 14 14" className="mr-[20px] h-[14px] w-[14px]"><path d="M1 5 H3.500 L7.500 1 V13 L3.500 9 H1 Z" fill="#fff" stroke="#3a3025" strokeWidth=".6" /><path d="M9.500 4.500 Q11 7 9.500 9.500 M11.500 3 Q13.700 7 11.500 11" fill="none" stroke="#fff" strokeWidth="1.100" /></svg>
        <div className="mr-[13px] flex w-[48px] flex-col items-center text-[12px] leading-[17px] whitespace-nowrap">
          <span>7:26 AM</span>
          <span>2/1/2017</span>
        </div>
        <button aria-label="Show desktop" className="h-[38px] w-[14px] rounded-[1px] border border-[#b59b86] bg-linear-to-b from-[#a08a78] via-[#5a2b12] via-40% to-[#7a3c1a]" />
      </div>
    </footer>
  );
}

export default function App() {
  return (
    <div className="flex min-h-screen flex-col overflow-hidden bg-white font-['Open_Sans','Noto_Sans',sans-serif]">
      <TitleBar />
      <Toolbar />
      <BookmarksBar />
      <div className="flex flex-1">
        <main className="flex flex-1 flex-col items-center bg-white pt-[8px] pb-[7px]">
          <DirectionForm />
          <MapPanel />
          <WeatherTable />
        </main>
        <Scrollbar />
      </div>
      <Taskbar />
    </div>
  );
}
